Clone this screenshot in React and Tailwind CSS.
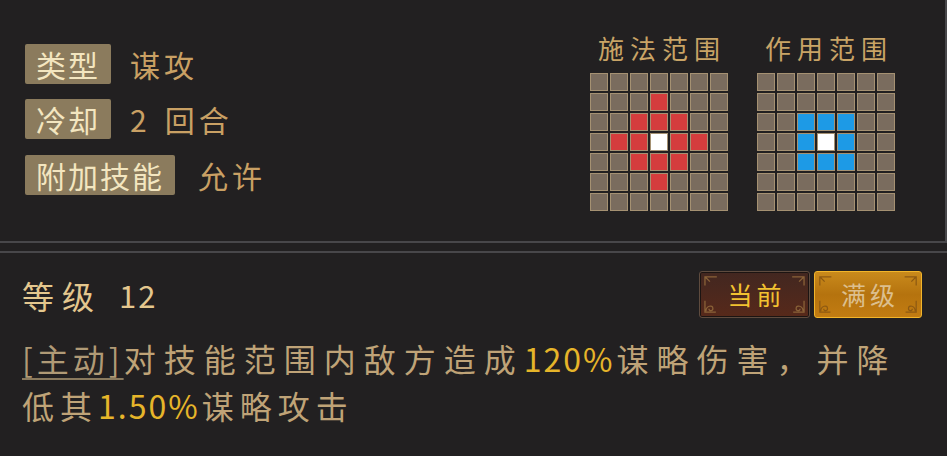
import React from 'react'

const castRange = [
  '.......',
  '...r...',
  '..rrr..',
  '.rrwrr.',
  '..rrr..',
  '...r...',
  '.......',
]

const effectRange = [
  '.......',
  '.......',
  '..bbb..',
  '..bwb..',
  '..bbb..',
  '.......',
  '.......',
]

const cellColor = {
  '.': 'bg-[#7a6c5e]',
  r: 'bg-[#d43d3d]',
  b: 'bg-[#1d9ae6]',
  w: 'bg-white',
}

const RangeGrid = ({ title, pattern }) => (
  <div className="flex flex-col items-center">
    <div className="h-[30px] leading-[30px] text-[26px] tracking-[6px] pl-[6px] text-[#c9a466]">{title}</div>
    <div className="mt-[10px] grid grid-cols-7 gap-[2px]">
      {pattern.join('').split('').map((c, i) => (
        <div key={i} className={`w-[18px] h-[18px] border border-[#a59172] ${cellColor[c]}`} />
      ))}
    </div>
  </div>
)

const Label = ({ children }) => (
  <div className="h-[40px] px-[11px] flex items-center bg-[#8b7b5d] rounded-[2px] text-[30px] tracking-[2px] text-[#f3e6c0] leading-none">
    {children}
  </div>
)

// corner scroll decoration drawn on the level buttons
const Ornament = ({ color }) => (
  <svg className="absolute inset-0 w-full h-full" viewBox="0 0 110 47" preserveAspectRatio="none" fill="none" stroke={color} strokeWidth="1.3">
    <path d="M5 14 V5 H17 M5 5 L10 10" />
    <path d="M93 5 H105 V14 M105 5 L100 10" />
    <path d="M5 30 V42 H16 M6 41 C6 35 13 34 13 38 C13 41 9 41 9 38.5" />
    <path d="M105 30 V42 H94 M104 41 C104 35 97 34 97 38 C97 41 101 41 101 38.5" />
  </svg>
)

export default function App() {
  return (
    <div className="w-[947px] h-[456px] bg-[#222021] overflow-hidden font-['Noto_Sans_CJK_SC','Noto_Sans',sans-serif]">
      <div className="h-[243px] border-r-2 border-b-2 border-[#48474a] flex justify-between pr-[50px]">
        <div className="pl-[25px] pt-[44px] flex flex-col">
          <div className="flex items-center">
            <Label>类型</Label>
            <span className="ml-[19px] text-[30px] leading-none tracking-[4px] text-[#c9a064]">谋攻</span>
          </div>
          <div className="flex items-center mt-[15px]">
            <Label>冷却</Label>
            <span className="ml-[19px] text-[30px] leading-none tracking-[4px] text-[#c9a064]">2<span className="ml-[14px]">回合</span></span>
          </div>
          <div className="flex items-center mt-[16px]">
            <Label>附加技能</Label>
            <span className="ml-[23px] text-[30px] leading-none tracking-[4px] text-[#c9a064]">允许</span>
          </div>
        </div>
        <div className="pt-[33px] flex gap-[29px]">
          <RangeGrid title="施法范围" pattern={castRange} />
          <RangeGrid title="作用范围" pattern={effectRange} />
        </div>
      </div>

      <div className="mt-[8px] border-t-2 border-[#48474a] px-[22px] pt-[18px]">
        <div className="flex items-center justify-between pr-[3px]">
          <div className="flex items-center text-[#e4c78e]">
            <span className="text-[32px] tracking-[8px] leading-none">等级</span>
            <span className="ml-[17px] text-[31px] tracking-[2px] leading-none">12</span>
          </div>
          <div className="flex gap-[4px]">
            <div className="relative w-[111px] h-[47px] rounded-[3px] border border-[#5e4b3e] bg-gradient-to-b from-[#422720] to-[#57291a] shadow-[inset_0_0_0_1px_#1c1412] flex items-center justify-center">
              <Ornament color="#8a6238" />
              <span className="relative text-[25px] tracking-[4px] pl-[4px] text-[#f2c230]">当前</span>
            </div>
            <div className="relative w-[108px] h-[47px] rounded-[3px] border-[1.5px] border-[#f2b52a] bg-gradient-to-b from-[#c98a1c] via-[#b5730e] to-[#c27c12] flex items-center justify-center">
              <Ornament color="#8e5a12" />
              <span className="relative text-[25px] tracking-[4px] pl-[4px] text-[#dcbf8e]">满级</span>
            </div>
          </div>
        </div>

        <p className="mt-[17px] text-[32px] leading-[47px] tracking-[8px] text-[#bfa377] whitespace-nowrap">
          <span className="underline decoration-[#8a7a5e] decoration-2 underline-offset-[6px] tracking-[4px] text-[#b09a76]">[主动]</span>
          对技能范围内敌方造成<span className="mr-[2px] text-[#e6b52a] tracking-[2px]">120%</span>谋略伤害，并降
          <br />
          <span className="tracking-[6px]">低其</span><span className="mr-[2px] text-[#e6b52a] tracking-[2px]">1.50%</span><span className="tracking-[6px]">谋略攻击</span>
        </p>
      </div>
    </div>
  )
}
